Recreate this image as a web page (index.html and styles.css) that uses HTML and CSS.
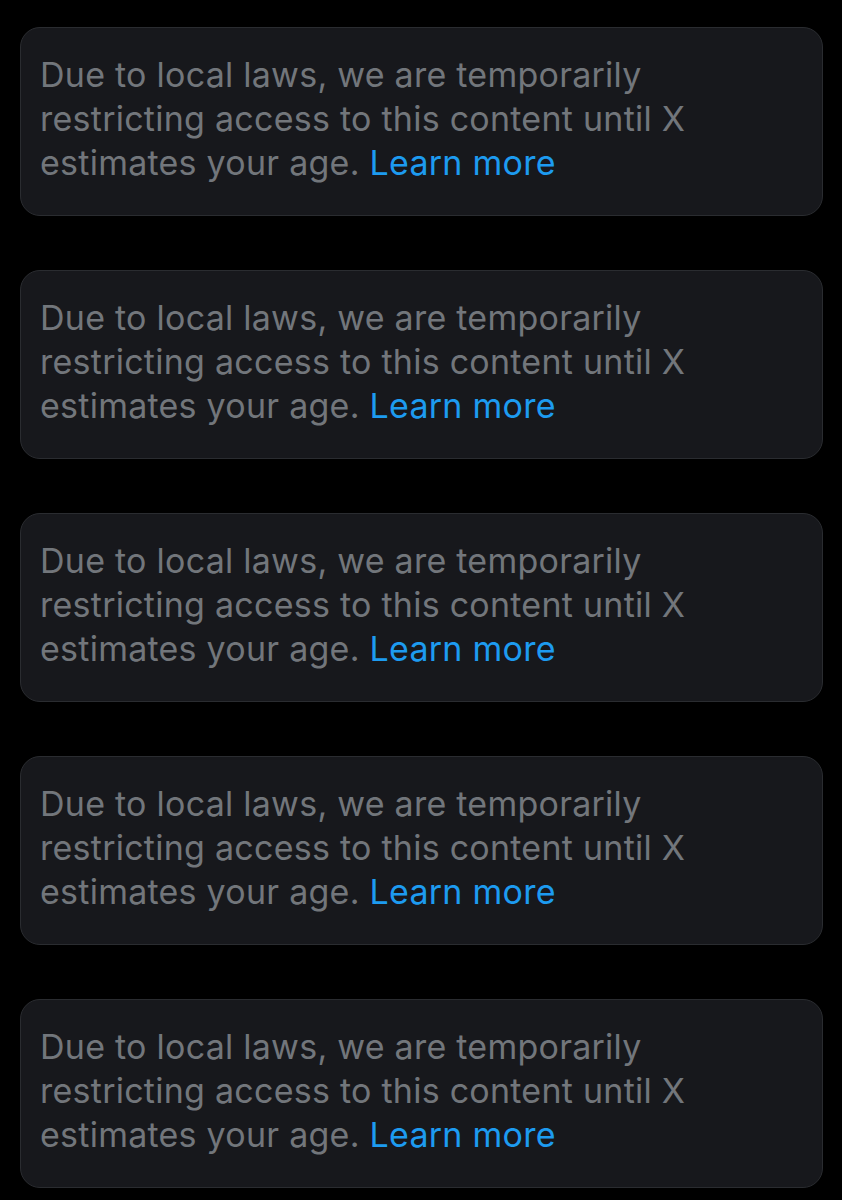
FILE: index.html
```html
<!DOCTYPE html>
<html lang="en">
<head>
  <meta charset="UTF-8">
  <title>Restricted content</title>
  <link rel="stylesheet" href="styles.css">
</head>
<body>
  <div class="feed">
    <p class="notice">Due to local laws, we are temporarily restricting access to this content until X estimates your age. <a href="#" class="learn">Learn more</a></p>
    <p class="notice">Due to local laws, we are temporarily restricting access to this content until X estimates your age. <a href="#" class="learn">Learn more</a></p>
    <p class="notice">Due to local laws, we are temporarily restricting access to this content until X estimates your age. <a href="#" class="learn">Learn more</a></p>
    <p class="notice">Due to local laws, we are temporarily restricting access to this content until X estimates your age. <a href="#" class="learn">Learn more</a></p>
    <p class="notice">Due to local laws, we are temporarily restricting access to this content until X estimates your age. <a href="#" class="learn">Learn more</a></p>
  </div>
</body>
</html>
```

FILE: styles.css
```css
body {
  margin: 0;
  background: #000;
  font-family: Inter, "Noto Sans", sans-serif;
}
.feed {
  display: flex;
  flex-direction: column;
  gap: 54px;
  padding: 27px 19px 0 20px;
}
.notice {
  margin: 0;
  background: #17181c;
  border: 1px solid #2a2c30;
  border-radius: 20px;
  padding: 25px 100px 30px 19px;
  color: #72767b;
  font-size: 34px;
  letter-spacing: 0.25px;
  line-height: 44px;
}
.learn {
  color: #1d9bf0;
  text-decoration: none;
}
```
